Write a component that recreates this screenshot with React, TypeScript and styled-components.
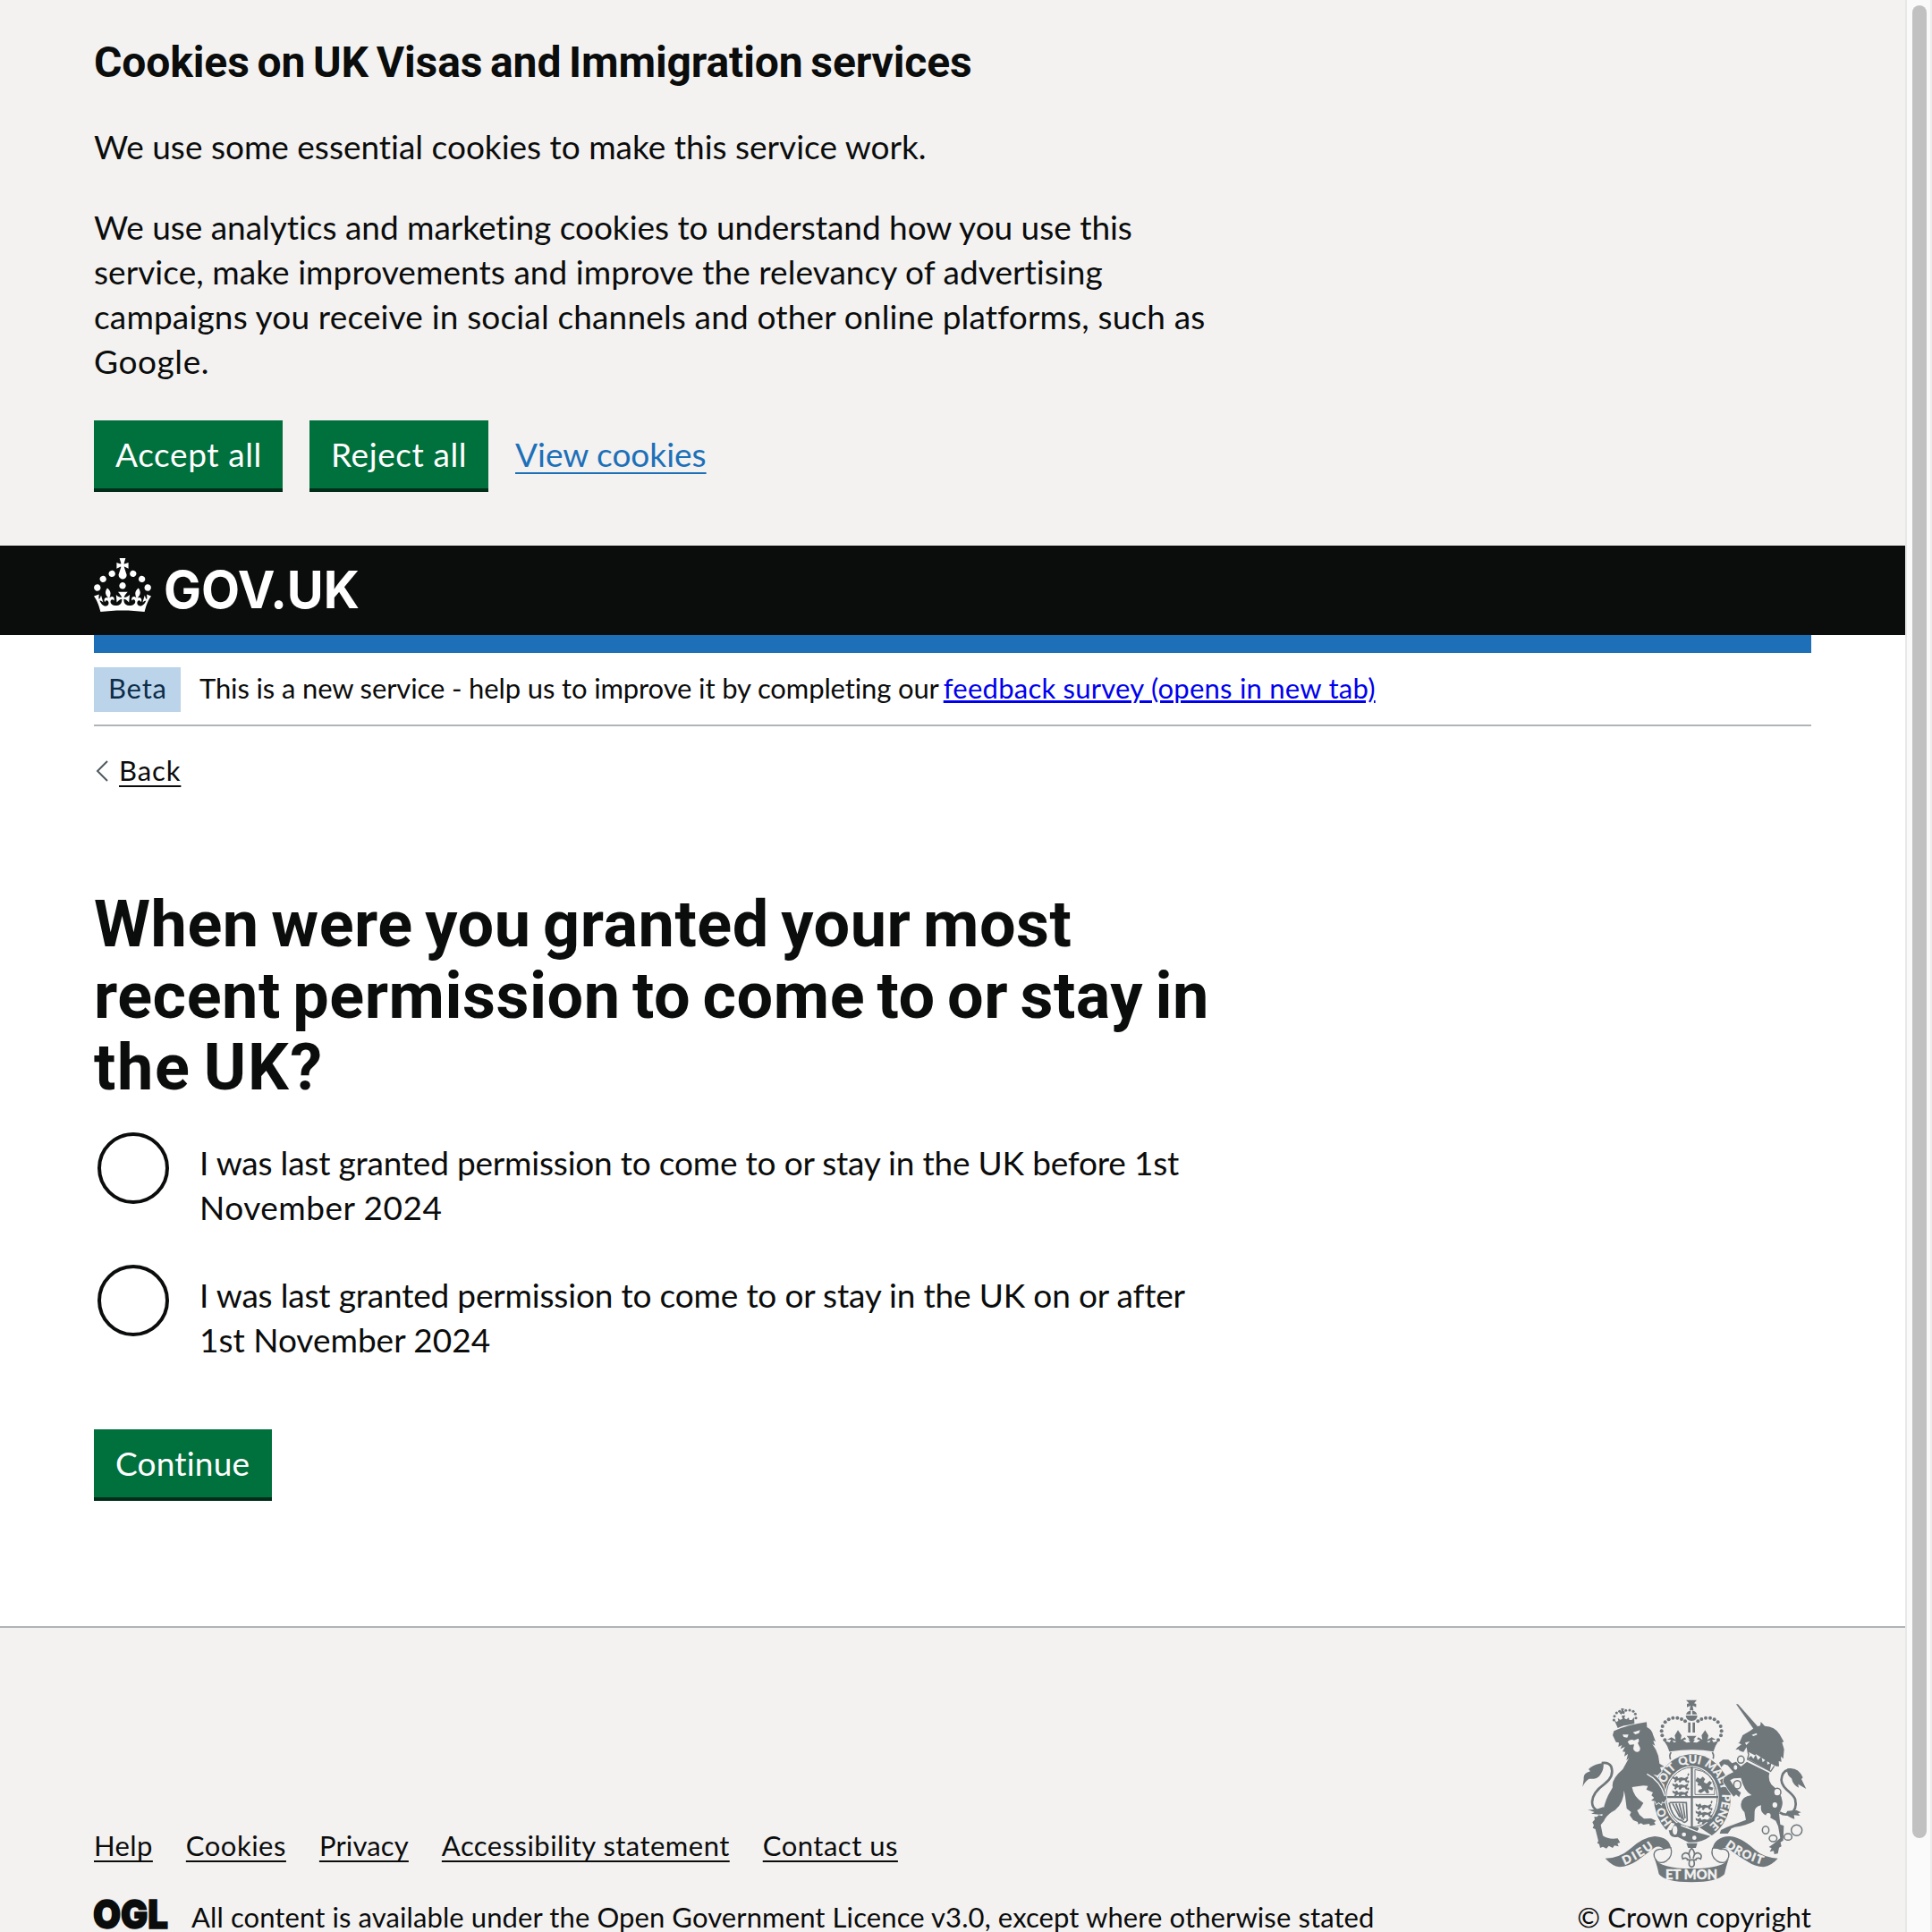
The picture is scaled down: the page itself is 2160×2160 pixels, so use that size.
import React from "react";
import styled, { createGlobalStyle } from "styled-components";

const ink = "#0b0c0c";
const grey = "#f3f2f1";
const crestGrey = "#6f777b";
const body = `"Lato", "Liberation Sans", sans-serif`;
const display = `"Roboto", "Liberation Sans", sans-serif`;

const GlobalStyle = createGlobalStyle`
  html, body { margin: 0; height: 2160px; overflow: hidden; background: #fff; }
  * { box-sizing: border-box; }
  body { color: ${ink}; font-family: ${body}; font-variant-ligatures: none; }
`;

const Window = styled.div`
  display: grid;
  grid-template-columns: 2130px 30px;
  height: 2160px;
  overflow: hidden;
`;
const Page = styled.div`
  display: flex;
  flex-direction: column;
  height: 2160px;
  overflow: hidden;
`;
const Scrollbar = styled.div`
  background: #fafafa;
  border-left: 2px solid #e8e8e8;
  border-right: 2px solid #ededed;
  padding: 6px 4px 0 6px;
`;
const Thumb = styled.div`
  height: 2049px;
  border-radius: 8px;
  background: #c1c1c1;
`;
const Width = styled.div`
  width: 1920px;
  margin: 0 auto;
`;

const Line = styled.span<{ $track?: number }>`
  display: block;
  white-space: nowrap;
  letter-spacing: ${(p) => p.$track ?? 0}px;
`;

const CookieBanner = styled.section`
  height: 610px;
  flex: none;
  padding-top: 40px;
  background: ${grey};
`;
const BannerTitle = styled.h2`
  margin: 0 0 39px;
  font: 700 48px/60px ${display};
  word-spacing: -3px;
`;
const Paragraph = styled.p`
  margin: 0 0 40px;
  font-size: 37px;
  line-height: 50px;
`;
const ButtonGroup = styled.div`
  display: flex;
  align-items: center;
  gap: 30px;
  padding-top: 1px;
`;
const Button = styled.button<{ $width: number; $track?: number }>`
  display: block;
  width: ${(p) => p.$width}px;
  height: 80px;
  padding: 0 0 0 24px;
  border: 0;
  border-bottom: 4px solid #002d18;
  background: #00703c;
  color: #fff;
  font: 400 37px/76px ${body};
  letter-spacing: ${(p) => p.$track ?? 0}px;
  text-align: left;
  white-space: nowrap;
`;
const Link = styled.a<{ $track?: number }>`
  color: ${ink};
  letter-spacing: ${(p) => p.$track ?? 0}px;
  white-space: nowrap;
  text-decoration: underline;
  text-decoration-thickness: 2px;
  text-underline-offset: 5px;
  text-decoration-skip-ink: none;
`;
const BannerLink = styled(Link)`
  color: #1d70b8;
  font-size: 37px;
  line-height: 50px;
  padding-bottom: 5px;
  text-underline-offset: 6px;
`;

const Header = styled.header`
  height: 100px;
  flex: none;
  padding-top: 14px;
  background: ${ink};
`;
const Logo = styled.svg`
  display: block;
  width: 320px;
  height: 64px;
`;
const HeaderBar = styled.div`
  height: 20px;
  background: #1d70b8;
`;
const PhaseBanner = styled.div`
  display: flex;
  align-items: center;
  gap: 21px;
  height: 82px;
  padding-top: 2px;
  border-bottom: 2px solid #b1b4b6;
  font-size: 31px;
  line-height: 46px;
`;
const Tag = styled.strong`
  width: 97px;
  height: 50px;
  padding-left: 16px;
  background: #bbd4ea;
  color: #0c2d4a;
  font-weight: 400;
  letter-spacing: 0.8px;
`;
const PhaseText = styled.div`
  display: flex;
  gap: 5px;
  height: 50px;
`;
const SurveyLink = styled(Link)`
  color: #0000ee;
  text-decoration-thickness: 3px;
  text-underline-offset: 2px;
  text-decoration-skip-ink: auto;
`;
const BackRow = styled.nav`
  display: flex;
  align-items: center;
  gap: 12px;
  margin-top: 29px;
  padding-left: 1px;
  height: 40px;
  font-size: 31px;
  line-height: 40px;
`;
const Chevron = styled.svg`
  display: block;
  width: 15px;
  height: 26px;
  margin-top: 2px;
`;
const Question = styled.h1`
  margin: 113px 0 32px;
  font: 700 72px/80px ${display};
  word-spacing: -5px;
`;
const Options = styled.div`
  display: flex;
  flex-direction: column;
  gap: 30px;
`;
const Option = styled.label`
  display: flex;
  gap: 34px;
  height: 118px;
  padding-left: 4px;
`;
const Radio = styled.input`
  appearance: none;
  flex: none;
  width: 80px;
  height: 80px;
  margin: 0;
  border: 4px solid ${ink};
  border-radius: 50%;
  background: #fff;
`;
const OptionText = styled.span`
  padding-top: 9px;
  font-size: 37px;
  line-height: 50px;
`;
const Actions = styled.div`
  margin-top: 66px;
`;

const Footer = styled.footer`
  margin-top: 140px;
  height: 342px;
  flex: none;
  border-top: 2px solid #b1b4b6;
  background: ${grey};
`;
const FooterRow = styled(Width)`
  display: flex;
  justify-content: space-between;
  font-size: 31px;
  line-height: 40px;
`;
const FooterMeta = styled.div`
  padding-top: 223px;
`;
const FooterLinks = styled.div`
  display: flex;
  gap: 37px;
`;
const Licence = styled.div`
  display: flex;
  gap: 27px;
  margin-top: 40px;
`;
const OglLogo = styled.svg`
  display: block;
  width: 82px;
  height: 36px;
  overflow: visible;
`;
const Copyright = styled.div`
  display: flex;
  flex-direction: column;
  align-items: flex-end;
  padding-top: 78px;
`;
const CrestArt = styled.svg`
  display: block;
  width: 256px;
  height: 208px;
  margin: 0 2px 17px 0;
`;

function GovukLogo() {
  return (
    <Logo viewBox="0 0 320 64" aria-label="GOV.UK">
      <path
        transform="scale(2.0)"
        fill="#fff"
        d="M22.6 10.4c-1 .4-2-.1-2.4-1-.4-.9.1-2 1-2.4.9-.4 2 .1 2.4 1s-.1 2-1 2.4m-5.9 6.7c-.9.4-2-.1-2.4-1-.4-.9.1-2 1-2.4.9-.4 2 .1 2.4 1s-.1 2-1 2.4m10.8-3.7c-1 .4-2-.1-2.4-1-.4-.9.1-2 1-2.4.9-.4 2 .1 2.4 1s0 2-1 2.4m3.3 4.8c-1 .4-2-.1-2.4-1-.4-.9.1-2 1-2.4.9-.4 2 .1 2.4 1s-.1 2-1 2.4M17 4.7l2.3 1.2V2.5l-2.3.7-.2-.2.9-3h-3.4l.9 3-.2.2c-.1.1-2.3-.7-2.3-.7v3.4L15 4.7c.1.1.1.2.2.2l-1.3 4c-.1.2-.1.4-.1.6 0 1.1.8 2 1.9 2.2h.7c1-.2 1.9-1.1 1.9-2.1 0-.2 0-.4-.1-.6l-1.3-4c-.1-.2 0-.2.1-.3m-7.6 5.7c.9.4 2-.1 2.4-1 .4-.9-.1-2-1-2.4-.9-.4-2 .1-2.4 1s0 2 1 2.4m-5 3c.9.4 2-.1 2.4-1 .4-.9-.1-2-1-2.4-.9-.4-2 .1-2.4 1s.1 2 1 2.4m-3.2 4.8c.9.4 2-.1 2.4-1 .4-.9-.1-2-1-2.4-.9-.4-2 .1-2.4 1s0 2 1 2.4m14.8 11c4.4 0 8.6.3 12.3.8 1.1-4.5 2.4-7 3.7-8.8l-2.5-.9c.2 1.3.3 1.9 0 2.7-.4-.4-.8-1.1-1.1-2.3l-1.2 4c.7-.5 1.3-.8 2-.9-1.1 2.5-2.6 3.1-3.5 3-1.1-.2-1.7-1.2-1.5-2.1.3-1.2 1.5-1.5 2.1-.1 1.1-2.3-.8-3-2-2.3 1.9-1.9 2.1-3.5.6-5.6-2.1 1.6-2.1 3.2-1.2 5.5-1.2-1.4-3.2-.6-2.5 1.6.9-1.4 2.1-.5 1.9.8-.2 1.1-1.7 2.1-3.5 1.9-2.7-.2-2.9-2.1-2.9-3.6.7-.1 1.9.5 2.9 1.9l.4-4.3c-1.1 1.1-2.1 1.4-3.2 1.4.4-1.2 2.1-3 2.1-3h-5.4s1.7 1.9 2.1 3c-1.1 0-2.1-.2-3.2-1.4l.4 4.3c1-1.4 2.2-2 2.9-1.9-.1 1.5-.2 3.4-2.9 3.6-1.9.2-3.4-.8-3.5-1.9-.2-1.3 1-2.2 1.9-.8.7-2.3-1.2-3-2.5-1.6.9-2.2.9-3.9-1.2-5.5-1.5 2-1.3 3.7.6 5.6-1.2-.7-3.1 0-2 2.3.6-1.4 1.8-1.1 2.1.1.2.9-.3 1.9-1.5 2.1-.9.2-2.4-.5-3.5-3 .6 0 1.2.3 2 .9l-1.2-4c-.3 1.1-.7 1.9-1.1 2.3-.3-.8-.2-1.4 0-2.7l-2.9.9C1.3 23 2.6 25.5 3.7 30c3.7-.5 7.9-.8 12.3-.8"
      />
      <text x="78" y="56" fill="#fff" fontFamily="Inter" fontWeight="700" fontSize="58" textLength="219" lengthAdjust="spacingAndGlyphs">
        GOV.UK
      </text>
    </Logo>
  );
}

const beads: [number, number][] = [
  [363, 195], [354, 180], [352, 165], [355, 149], [364, 135], [376, 126], [390, 121], [405, 121], [419, 125], [431, 132],
];
const dots: [number, number][] = [[192, 128], [194, 115], [201, 104], [211, 99], [232, 96], [245, 95], [257, 99], [264, 108], [266, 121]];
const chain: [number, number, number, number][] = [
  [618, 261, 11, 12], [600, 287, 6, 8], [606, 345, 12, 14], [740, 370, 12, 13], [732, 413, 8, 9], [710, 449, 8, 9],
  [701, 497, 11, 13], [726, 525, 13, 11], [776, 520, 13, 11], [805, 498, 18, 18],
];

const lionRows = (x: number, y: number) => (
  <g transform={`translate(${x} ${y})`}>
    {[0, 24, 48].map((dy) => (
      <path
        key={dy}
        transform={`translate(0 ${dy})`}
        d="M2 2l8 4 8-4 4 7 10-3 12 3 9-6 3 5-5 6 4 8-7 1-5-7-9 1-5 7-6-2 2-6-8 1-3 6-6-2 3-7-8-4zM52 -2l4-6 3 3-3 8z"
      />
    ))}
  </g>
);

function Crest() {
  return (
    <CrestArt viewBox="80 53 768 624" fill={crestGrey} aria-label="Royal coat of arms">
      <defs>
        <path id="garter" d="M455 501A100 114 0 0 1 455 273A100 114 0 0 1 455 501" />
        <path id="left-scroll" d="M228 614Q290 588 345 541" />
        <path id="right-scroll" d="M563 551Q612 590 700 616" />
      </defs>

      {/* royal crown */}
      <path d="M434 61l36 0-9 11 7 2 0 11-12-5 3 15-13 0 3-15-12 5 0-11 7-2zM434 109q4-10 16-13l0 13zM455 96q12 3 16 13l-16 0zM433 113l39 0q0 17-19 18-19-1-20-18zM441 136l8 0 0 34-8 0zM456 136l8 0 0 34-8 0z" />
      {beads.map(([x, y]) => (
        <g key={x}>
          <circle cx={x} cy={y} r="6" />
          <circle cx={905 - x} cy={y} r="6" />
        </g>
      ))}
      <path d="M362 198l17 5 5-9-13 0 14-8 14 8-3-14 11-18 12 18-3 14 14-8 6 8 10-1-10-12 33 0-10 12 10 1 6-8 14 8-3-14 12-18 11 18-3 14 14-8 14 8-13 0 5 9 17-5q-12 17-17 36-68-13-148 0-5-19-18-36z" />
      <path fill={grey} d="M424 196l12 8 12-2-8-12zM482 196l-12 8-12-2 8-12zM388 196l6 8 8-4zM517 196l-6 8-8-4z" />
      <path fill="none" stroke={crestGrey} strokeWidth="5" d="M384 236q-9 13 0 27M522 236q9 13 0 27" />

      {/* garter and shield */}
      <ellipse cx="455" cy="387" rx="134" ry="151" fill={grey} />
      <ellipse cx="455" cy="389" rx="129" ry="146" />
      <ellipse cx="453" cy="387" rx="91" ry="105" fill={grey} />
      <ellipse cx="453" cy="387" rx="86" ry="100" fill="none" stroke={crestGrey} strokeWidth="3" />
      <path d="M450 285h7v205h-7zM366 383h176v7H366z" />
      <path fill="none" stroke={crestGrey} strokeWidth="3" d="M464 294q56 6 66 60l0 24-66 0z" />
      {lionRows(386, 314)}
      {lionRows(464, 406)}
      <path d="M472 320l10 6 8-8 8 8-5 10 10 6 10-10 8 6-9 13 14 4-4 9-14-4 4 12-8 3-8-10-12 8-10-4 4-8 10-2-4-10-12-2 3-8-10-7z" />
      <path fill="none" stroke={crestGrey} strokeWidth="5" d="M379 405q32-2 56 0l3 60q-10 12-17 1-33-7-44-61M389 408l24 46M400 408l20 52M411 408l15 56M423 408l8 50" />
      <g fill={grey} stroke={grey} strokeWidth="1" fontFamily="Lato" fontWeight="700" fontSize="38">
        <text><textPath href="#garter" startOffset="76">HO</textPath></text>
        <text><textPath href="#garter" startOffset="194">SOIT</textPath></text>
        <text><textPath href="#garter" startOffset="293">QUI</textPath></text>
        <text><textPath href="#garter" startOffset="376">MAL</textPath></text>
        <text><textPath href="#garter" startOffset="456">Y</textPath></text>
        <text><textPath href="#garter" startOffset="494">PENSE</textPath></text>
      </g>
      <path fill={grey} d="M366 500l18-28 92 24 0-10 52 34-66 30-58-18z" />
      <path d="M396 476q20-8 22 8l58 22 40 11q-30 24-74 21l-36-18q-18 4-26-8l-4-14 8 0z" />
      <path d="M440 487l36 2-4 12z" />
      <g fill={grey}>
        <circle cx="427" cy="512" r="7" />
        <circle cx="462" cy="523" r="7" />
        <ellipse cx="397" cy="498" rx="8" ry="15" />
      </g>

      {/* lion */}
      {dots.map(([x, y]) => <circle key={x} cx={x} cy={y} r="4.6" />)}
      <path d="M216 89l10 0-2 8 5 3-2 8-7-2-4 4-5-6 6-5zM193 127l8 8 6-5-2-9 8 6 8-3-3-10 12-2-3 10 7 4 8-6 2 8 8 0 8-9 1 22-4 4q-29-2-52 10z" />
      <path
        stroke={grey}
        strokeWidth="5"
        paintOrder="stroke"
        d="M188 179l4-14q48-22 110-30l1 17q16 7 20 25l9 23-8-3 6 17-9-5q13 16 20 39l4 26 16 10-14 3 5 13-14 14-14-4q24 16 37 48l8 34-9 13-7-3-2 9-9-7-7 6-5-10-13-2 10-9-9-8 5-10-22-10 5-12-15-1-38 5q5 34 38 53l-11 18-10 7 8 15 15 13 24-1 17 8-7 5 5 8-19 4-2-7-20 3-8-5-9 4-2-8-15-6-12-17 5-10-15-12-5-40-4-21q-1 42-30 66-28 14-37 36l-11 14 7 36q19 14 50 9l8 14-9 3 4 10-14-3-6 8-13-7-8 9-12-6-9 4-3-12-7-5 4-6-10-40-9-4 4-9-5-10 8-9-2-9 9 0 6-6 12 3q5-39 20-70l15-26q-6-27 34-61l21-38-9 9 5-22-12 8 3-15-9-1 8-16-15 7 5-13-12 6 2-14-10-2z"
      />
      <path fill={grey} d="M221 177l20 0-4 10-12-2zM256 169l24-7-4 10-12 4zM238 201q10-10 22-5l14-6q5 10-2 15l8 16q1 13-9 14-12-1-14-12l3-13-15 1z" />
      <path fill="none" stroke={grey} strokeWidth="4" d="M303 309q44 22 60 74" />
      <path fill="none" stroke={crestGrey} strokeWidth="8" d="M166 438q-46-2-47-34 0-32 42-62 34-26 22-58-8-15-32-12" />
      <path d="M87 352l4-26q-3-20 22-26l-6-7q18-18 50-21 3 24-14 44-13 12-34 9-15 10-22 27zM104 428q26 4 52-8l20 14-14 8-20 3-26-3 11-5z" />

      {/* unicorn */}
      <path d="M602 75l6 0 66 74-12 11z" />
      <path d="M613 204l11-25q26-14 43-28l16-4 2-13 13 14q34 1 50 28l14 25-6 2 7 23-3 32-8-8 2 18-9-2 1 17-15 0-62-40-14 10-6-6-8-5-4-23-10 16q-15-3-17-9l-10 2 6-8 14-10-10-5-12 7z" />
      <path fill={grey} d="M654 178l16-6 3 5-13 5zM632 204l16-4-12 12zM645 236l94 49-14 22-88-42z" />
      <path fill="none" stroke={crestGrey} strokeWidth="4" d="M645 240l-5 20 78 40 12-18" />
      <path d="M641 258l11-10 8 10 8-14 7 18 12-12 4 20 14-12 2 20 14-8-6 28z" />
      <path
        stroke={grey}
        strokeWidth="4"
        paintOrder="stroke"
        d="M638 268l76 38q-6 21 6 38 35 28 37 57 3 14-11 40l4 37 12 5-2 49-9 6 3 14-8 4-4 20-12 2-2-11-13 3 6-12-9-4 16-11 22-19-7-40-8-18-32-18q-22-9-17-34-24 5-22 26l-1 27q-28 16-65 20l-12 5-12 17-27 0 4-12 20-10 16-6 48-18-5-26q-12-10-12-26 1-27 36-31-26-14-36-58L594 324L582 330L592 346L604 360L618 372L612 387L602 378L594 385L580 368L568 350L558 334L562 321L576 311L593 303L584 292L574 280L562 276L552 286L545 271L558 261L576 261L588 273L602 268L618 284z"
      />
      <path fill="none" stroke={crestGrey} strokeWidth="8" d="M748 438q18 12 36 4 24-14 16-48-4-12-28-32-24-22-16-46 6-22 32-22" />
      <path d="M774 291q36-7 52 30l-5 5 16 33-27-16 2 12q-19-8-24-31-18-12-14-33zM774 433l30-3 16 8-10 3 6 8-20-2 2 13q-18-4-30-17z" />
      {chain.map(([x, y, rx, ry]) =>
        rx < 9 ? (
          <ellipse key={x} cx={x} cy={y} rx={rx} ry={ry} fill={grey} />
        ) : (
          <ellipse key={x} cx={x} cy={y} rx={rx} ry={ry} fill={grey} stroke={crestGrey} strokeWidth="4.5" />
        )
      )}

      {/* motto scroll */}
      <path d="M163 592Q212 590 244 562Q290 520 329 518q49 3 54 38-15 2-22 8-14-18-33-8-31 24-60 45-28 18-57 20-24-3-48-29zM742 592Q692 588 664 562Q616 519 579 518q-47 2-56 40 18 0 24 8 12-14 30-6 34 26 62 42 26 18 55 19 26-4 48-29z" />
      <path fill={grey} stroke={crestGrey} strokeWidth="4" d="M383 556q8 28-14 44-15 10-30 4-18-19-10-34 10-12 26-8 16-6 28-6zM523 558q-8 26 14 42 15 10 30 4 16-19 8-34-8-12-24-8-16-6-28-4z" />
      <path d="M328 592q21 34 124 34 108 0 126-34-8 20-15 53-24 27-111 27-88 0-109-27-7-33-15-53z" />
      <g fill={grey} stroke={grey} strokeWidth="1.5" fontFamily="Lato" fontWeight="700">
        <text fontSize="39"><textPath href="#left-scroll" startOffset="0" textLength="114">DIEU</textPath></text>
        <text x="365" y="662" fontSize="44" textLength="174">ET MON</text>
        <text fontSize="39"><textPath href="#right-scroll" startOffset="2" textLength="138">DROIT</textPath></text>
      </g>
      <path d="M435 541h37l-5 16h-26z" />
      <path fill={grey} stroke={crestGrey} strokeWidth="5" d="M453 558q15 13 5 34 4-21 18-18 14 6 7 20-11-6-17 2l-6 3q6 20-7 22-13-2-7-22l-6-3q-6-8-17-2-7-14 7-20 14-3 18 18-10-21 5-34zM436 597h34" />
    </CrestArt>
  );
}

export default function App() {
  return (
    <Window>
      <GlobalStyle />
      <Page>
        <CookieBanner>
          <Width>
            <BannerTitle><Line $track={-0.12}>Cookies on UK Visas and Immigration services</Line></BannerTitle>
            <Paragraph><Line>We use some essential cookies to make this service work.</Line></Paragraph>
            <Paragraph>
              <Line $track={-0.03}>We use analytics and marketing cookies to understand how you use this</Line>
              <Line $track={0.06}>service, make improvements and improve the relevancy of advertising</Line>
              <Line $track={0.16}>campaigns you receive in social channels and other online platforms, such as</Line>
              <Line $track={0.6}>Google.</Line>
            </Paragraph>
            <ButtonGroup>
              <Button $width={211} $track={0.6}>Accept all</Button>
              <Button $width={200} $track={0.6}>Reject all</Button>
              <BannerLink>View cookies</BannerLink>
            </ButtonGroup>
          </Width>
        </CookieBanner>
        <Header><Width><GovukLogo /></Width></Header>
        <Width>
          <HeaderBar />
          <PhaseBanner>
            <Tag>Beta</Tag>
            <PhaseText>
              <Line $track={-0.13}>This is a new service - help us to improve it by completing our</Line>
              <SurveyLink $track={0.24}>feedback survey (opens in new tab)</SurveyLink>
            </PhaseText>
          </PhaseBanner>
          <BackRow>
            <Chevron viewBox="0 0 15 26"><path d="M14 2L3 13L14 24" fill="none" stroke="#505a5f" strokeWidth="2" /></Chevron>
            <Link $track={0.9}>Back</Link>
          </BackRow>
          <Question>
            <Line $track={0.55}>When were you granted your most</Line>
            <Line $track={0.52}>recent permission to come to or stay in</Line>
            <Line $track={1.6}>the UK?</Line>
          </Question>
          <Options>
            <Option>
              <Radio type="radio" name="granted" />
              <OptionText>
                <Line $track={-0.2}>I was last granted permission to come to or stay in the UK before 1st</Line>
                <Line $track={0.5}>November 2024</Line>
              </OptionText>
            </Option>
            <Option>
              <Radio type="radio" name="granted" />
              <OptionText>
                <Line $track={-0.18}>I was last granted permission to come to or stay in the UK on or after</Line>
                <Line>1st November 2024</Line>
              </OptionText>
            </Option>
          </Options>
          <Actions><Button $width={199} $track={0.2}>Continue</Button></Actions>
        </Width>
        <Footer>
          <FooterRow>
            <FooterMeta>
              <FooterLinks>
                <Link $track={0.4}>Help</Link>
                <Link $track={0.5}>Cookies</Link>
                <Link $track={0.15}>Privacy</Link>
                <Link $track={0.46}>Accessibility statement</Link>
                <Link $track={0.5}>Contact us</Link>
              </FooterLinks>
              <Licence>
                <OglLogo viewBox="0 0 82 36" aria-label="Open Government Licence">
                  <text x="-1" y="33" fontFamily="Inter" fontWeight="900" fontSize="44" fill={ink} stroke={ink} strokeWidth="1.5" textLength="84" lengthAdjust="spacingAndGlyphs">OGL</text>
                </OglLogo>
                <Line $track={0.1}>All content is available under the Open Government Licence v3.0, except where otherwise stated</Line>
              </Licence>
            </FooterMeta>
            <Copyright>
              <Crest />
              <Line $track={0.1}>© Crown copyright</Line>
            </Copyright>
          </FooterRow>
        </Footer>
      </Page>
      <Scrollbar><Thumb /></Scrollbar>
    </Window>
  );
}
